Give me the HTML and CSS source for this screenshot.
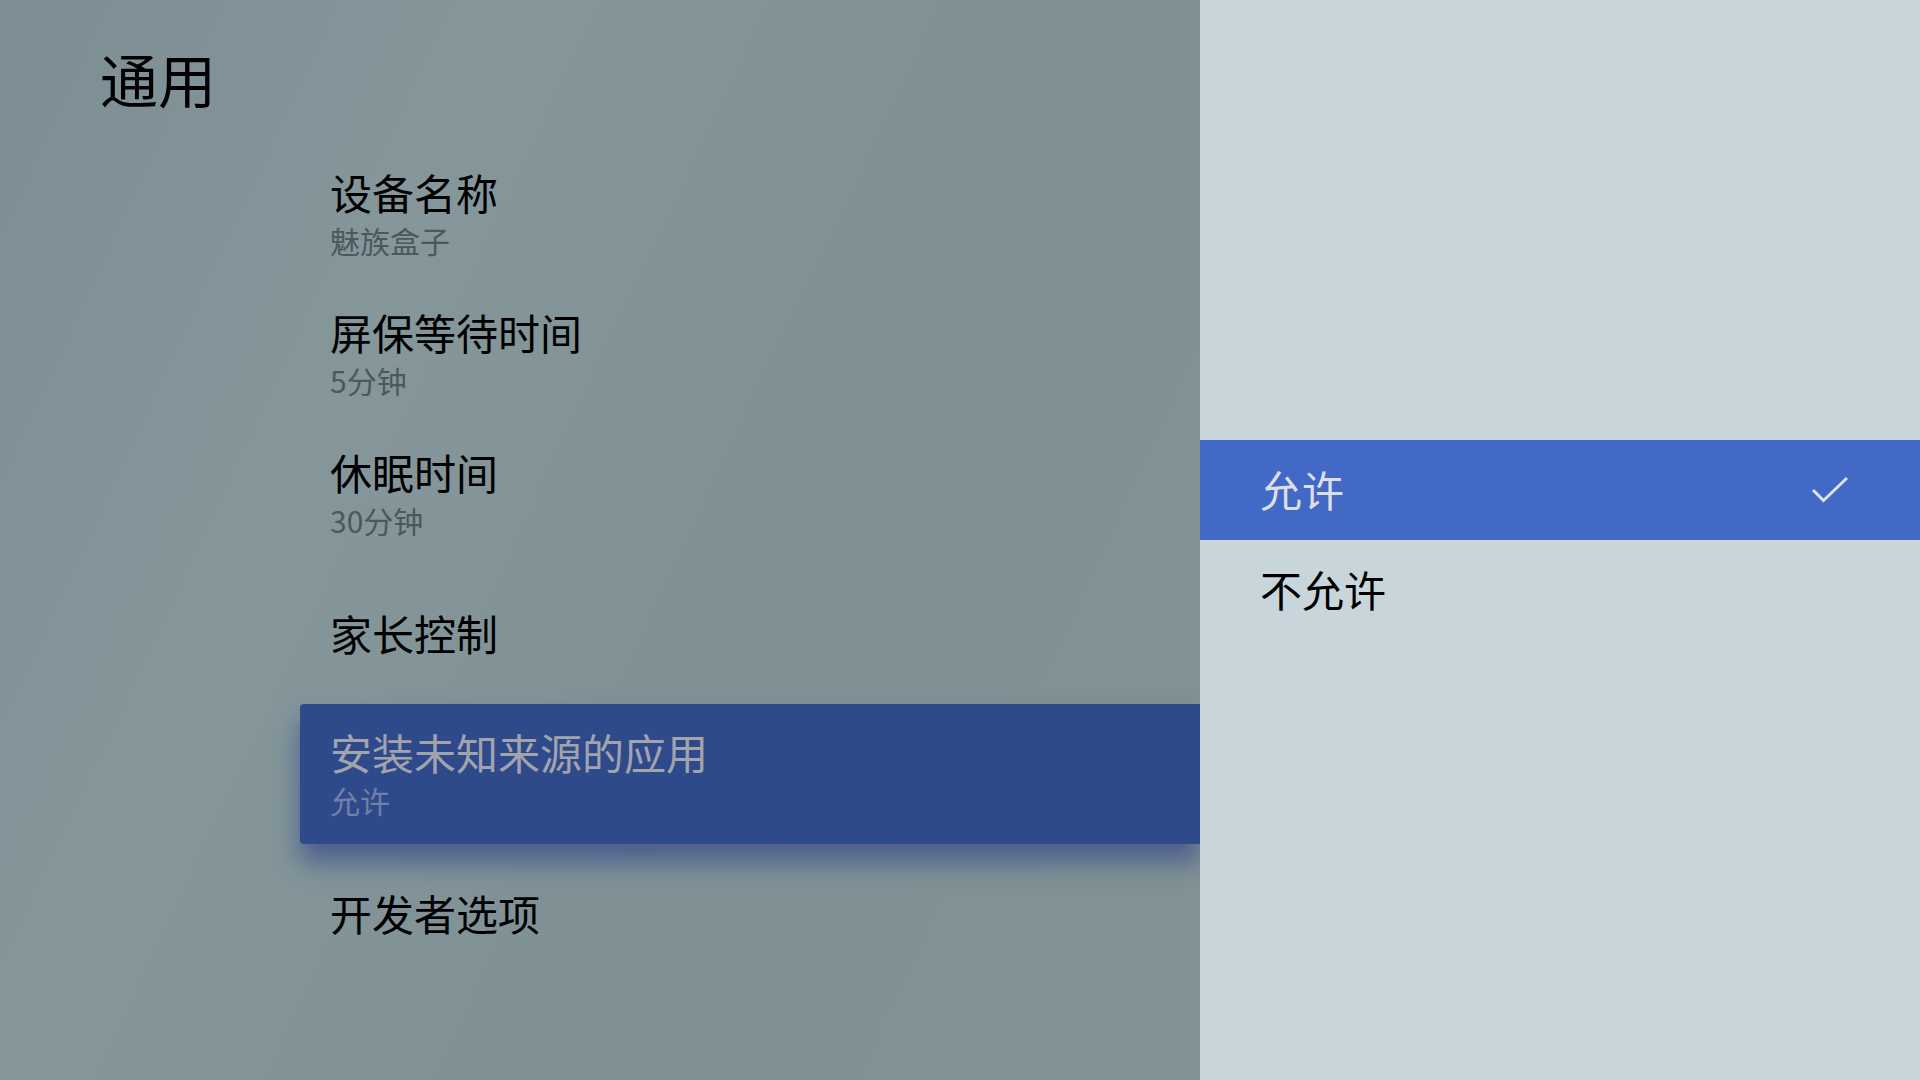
FILE: index.html
```html
<!DOCTYPE html>
<html lang="zh-CN">
<head>
  <meta charset="UTF-8">
  <title>通用</title>
  <link rel="stylesheet" href="styles.css">
</head>
<body>
  <div class="screen">
    <div class="settings">
      <h1 class="page-title">通用</h1>
      <ul class="menu">
        <li class="menu-item">
          <span class="item-title">设备名称</span>
          <span class="item-value">魅族盒子</span>
        </li>
        <li class="menu-item">
          <span class="item-title">屏保等待时间</span>
          <span class="item-value">5分钟</span>
        </li>
        <li class="menu-item">
          <span class="item-title">休眠时间</span>
          <span class="item-value">30分钟</span>
        </li>
        <li class="menu-item">
          <span class="item-title">家长控制</span>
        </li>
        <li class="menu-item focused">
          <span class="item-title">安装未知来源的应用</span>
          <span class="item-value">允许</span>
        </li>
        <li class="menu-item">
          <span class="item-title">开发者选项</span>
        </li>
      </ul>
    </div>

    <div class="picker">
      <ul class="options">
        <li class="option selected">
          <span>允许</span>
          <svg class="check" width="40" height="30" viewBox="0 0 40 30">
            <path d="M3 15 L13.5 25.5 L37 3" fill="none" stroke="#dfe2ea" stroke-width="3"/>
          </svg>
        </li>
        <li class="option">
          <span>不允许</span>
        </li>
      </ul>
    </div>
  </div>
</body>
</html>
```

FILE: styles.css
```css
body {
  margin: 0;
  padding: 0;
  font-family: "Noto Sans CJK SC", "Noto Sans", sans-serif;
}

.screen {
  display: flex;
  width: 1920px;
  height: 1080px;
  overflow: hidden;
}

/* left side: settings list */
.settings {
  width: 1200px;
  flex-shrink: 0;
  background: linear-gradient(115deg, #7c8e94 0%, #85979b 30%, #809196 60%, #829395 100%);
}

.page-title {
  margin: 49px 0 0 100px;
  font-size: 58px;
  line-height: 58px;
  font-weight: 400;
  color: #000;
}

.menu {
  list-style: none;
  margin: 37px 0 0 300px;
  padding: 0;
}

.menu-item {
  height: 140px;
  box-sizing: border-box;
  padding-left: 30px;
  padding-bottom: 2px;
  display: flex;
  flex-direction: column;
  justify-content: center;
}

.item-title {
  font-size: 42px;
  line-height: 54px;
  color: #000;
}

.item-value {
  font-size: 30px;
  line-height: 42px;
  color: #4b585c;
}

.menu-item.focused {
  background-color: #2f4a8a;
  border-radius: 4px 0 0 4px;
  box-shadow: 0 18px 26px rgba(38, 58, 135, 0.6);
}

.menu-item.focused .item-title {
  color: #a1a4ad;
}

.menu-item.focused .item-value {
  color: #7180a6;
}

/* right side: options */
.picker {
  flex: 1;
  background-color: #c8d6db;
}

.options {
  list-style: none;
  margin: 440px 0 0;
  padding: 0;
}

.option {
  height: 100px;
  box-sizing: border-box;
  display: flex;
  align-items: center;
  justify-content: space-between;
  padding: 0 70px 4px 60px;
  font-size: 42px;
  color: #000;
}

.option.selected {
  background-color: #4169c5;
  color: #dcdfe8;
}

.check {
  margin-top: 4px;
}
```
